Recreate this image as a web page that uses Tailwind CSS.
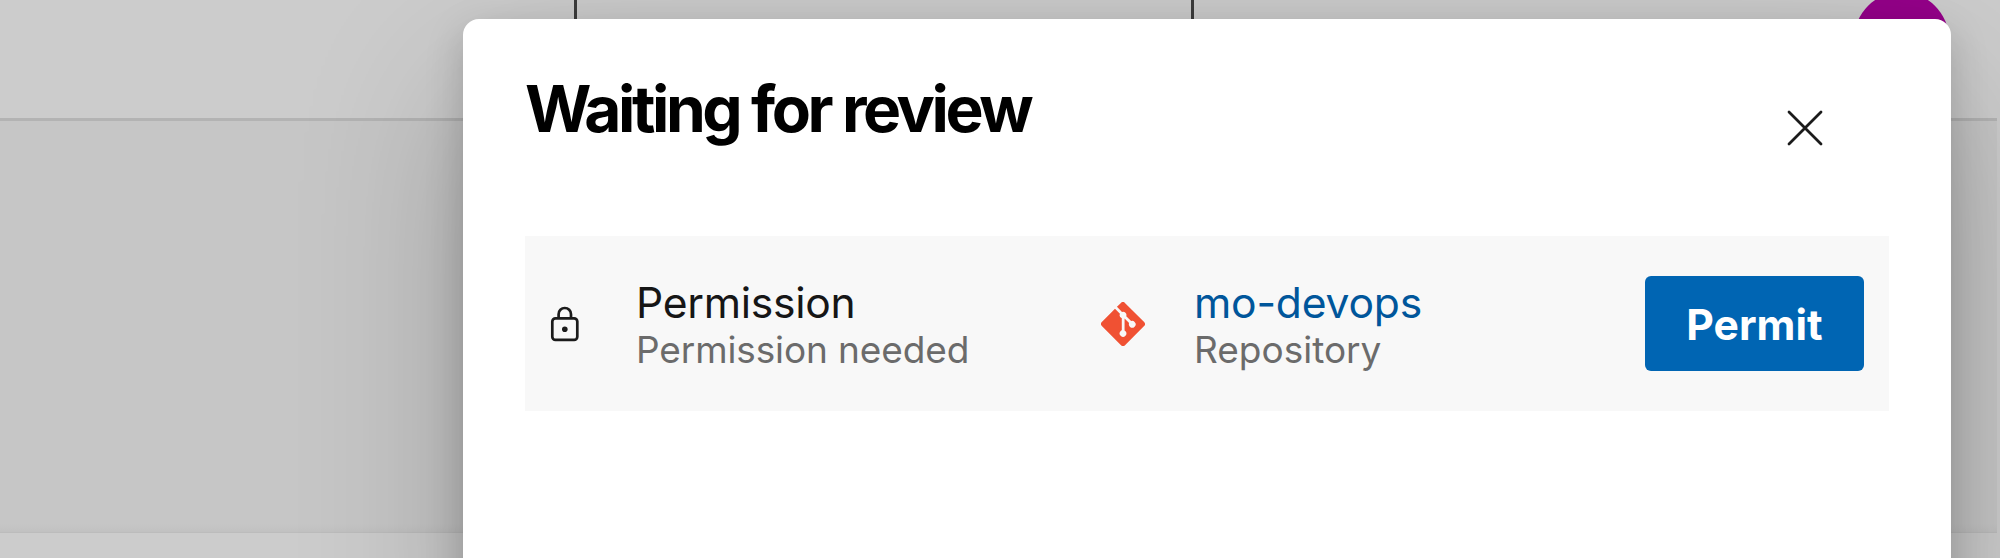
<!DOCTYPE html>
<html lang="en">
<head>
<meta charset="utf-8">
<title>Waiting for review</title>
<script src="https://cdn.jsdelivr.net/npm/@tailwindcss/browser@4"></script>
</head>
<body class="relative h-[558px] w-[2000px] overflow-hidden bg-[#c6c6c6] font-['Inter','Liberation_Sans',sans-serif]">
  <!-- Dimmed page behind the dialog -->
  <div class="flex h-[558px] w-full flex-col border-r-[3px] border-[#cccccc]">
    <header class="flex h-[121px] shrink-0 justify-between border-b-[3px] border-[#b3b3b3] bg-[#cccccc]">
      <div class="ml-[574px] h-full w-[620px] border-x-[3px] border-[#3c3c3c]"></div>
      <div class="-mt-2 mr-[48px] size-[95px] rounded-full bg-[#95008a]"></div>
    </header>
    <main class="flex-1 bg-linear-to-b from-[#c6c6c6] from-98% to-[#c1c1c1]"></main>
    <section class="h-[26px] shrink-0 border-t border-[#bcbcbc] bg-[#cccccc]"></section>
  </div>

  <!-- Dialog layer, clipped to the window -->
  <div class="absolute inset-0 overflow-clip">
  <div role="dialog" class="ml-[463px] mt-[19px] h-[640px] w-[1488px] rounded-[16px] bg-white px-[62px] shadow-[0_68px_165px_rgba(0,0,0,0.22),0_13px_38px_rgba(0,0,0,0.18)]">
    <div class="flex h-[217px] items-start justify-between">
      <h1 class="mt-[51px] whitespace-nowrap text-[64px] leading-[78px] font-bold tracking-[-3.42px] text-black">Waiting for review</h1>
      <button aria-label="Close" class="mt-[89.5px] mr-[65px]">
        <svg class="block size-[38px]" viewBox="0 0 38 38" fill="none" stroke="#1b1b1b" stroke-width="2.8" stroke-linecap="round"><path d="M3 3 35 35M35 3 3 35"/></svg>
      </button>
    </div>
    <div class="flex h-[175px] items-center bg-[#f8f8f8] pr-[25px]">
      <svg class="ml-[25px] h-[36px] w-[30px] shrink-0" viewBox="0 0 30 36" fill="none" stroke="#1b1b1b" stroke-width="2.7"><rect x="2.3" y="12.3" width="25" height="21.6" rx="3.2"/><path d="M8.6 12.3V8.2a6.2 6.2 0 0 1 12.4 0v4.1"/><circle cx="14.8" cy="23.2" r="2.8" fill="#1b1b1b" stroke="none"/></svg>
      <div class="ml-[56px] w-[465px] whitespace-nowrap">
        <div class="text-[42.6px] leading-[52px] tracking-[-0.28px] text-[#161616]">Permission</div>
        <div class="text-[37px] leading-[42px] tracking-[-0.12px] text-[#6b6b6b]">Permission needed</div>
      </div>
      <svg class="size-[44px] shrink-0" viewBox="0 0 92 92"><path fill="#f05133" d="M90.156 41.965 50.036 1.848a5.918 5.918 0 0 0-8.372 0l-8.328 8.332 10.566 10.566a7.03 7.03 0 0 1 7.23 1.684 7.034 7.034 0 0 1 1.669 7.277l10.187 10.184a7.028 7.028 0 0 1 7.278 1.672 7.04 7.04 0 0 1 0 9.957 7.05 7.05 0 0 1-9.965 0 7.044 7.044 0 0 1-1.528-7.66l-9.5-9.497V59.36a7.04 7.04 0 0 1 1.86 11.29 7.04 7.04 0 0 1-9.957 0 7.04 7.04 0 0 1 0-9.958 7.06 7.06 0 0 1 2.304-1.539V33.926a7.049 7.049 0 0 1-3.82-9.234L29.242 14.272 1.73 41.777a5.925 5.925 0 0 0 0 8.371L41.852 90.27a5.925 5.925 0 0 0 8.37 0l39.934-39.934a5.925 5.925 0 0 0 0-8.371"/></svg>
      <div class="ml-[49px] whitespace-nowrap">
        <div class="text-[42.6px] leading-[52px] tracking-[-0.2px] text-[#00569b]">mo-devops</div>
        <div class="text-[37px] leading-[42px] text-[#6b6b6b]">Repository</div>
      </div>
      <button class="ml-auto h-[95px] w-[219px] shrink-0 rounded-[6px] bg-[#0065b3] pt-0.5 text-[42.6px] leading-[52px] font-bold text-white">Permit</button>
    </div>
  </div>
  </div>
</body>
</html>
